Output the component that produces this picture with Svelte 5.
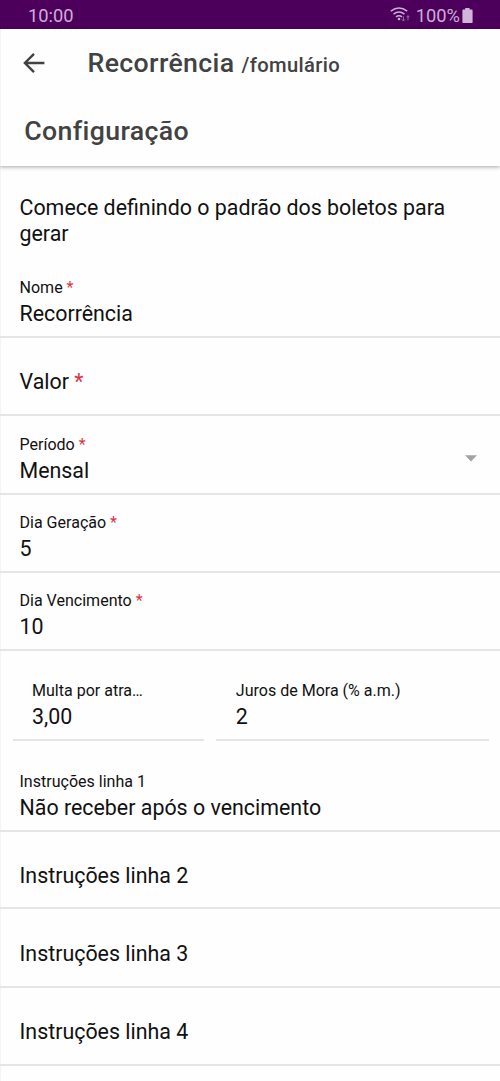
<script>
  const main = [
    { label: 'Nome', required: true, value: 'Recorrência' },
    { label: 'Valor', required: true },
    { label: 'Período', required: true, value: 'Mensal', select: true },
    { label: 'Dia Geração', required: true, value: '5' },
    { label: 'Dia Vencimento', required: true, value: '10' }
  ];
  const rates = [
    { label: 'Multa por atra…', value: '3,00' },
    { label: 'Juros de Mora (% a.m.)', value: '2' }
  ];
  const instructions = [
    { label: 'Instruções linha 1', value: 'Não receber após o vencimento' },
    { label: 'Instruções linha 2' },
    { label: 'Instruções linha 3' },
    { label: 'Instruções linha 4' }
  ];
</script>

{#snippet field(f)}
  <div class="field" class:empty={!f.value}>
    <div class="text">
      <span class="label">{f.label}{#if f.required}<span class="required">&nbsp;*</span>{/if}</span>
      {#if f.value}<span class="value">{f.value}</span>{/if}
    </div>
    {#if f.select}
      <svg class="caret" width="12" height="7" viewBox="0 0 12 7"><path d="M0 .3h12L6 6.4z" fill="#a3a3a3" /></svg>
    {/if}
  </div>
{/snippet}

<div class="screen">
  <div class="status">
    <span class="clock">10:00</span>
    <div class="indicators">
      <svg class="wifi" width="20" height="16" viewBox="0 0 20 16" fill="none" stroke="#cdaed6">
        <path d="M.8 5.2Q9 -1.1 17.2 5.2M3.500 8.200Q9 3.700 14.500 8.200M6 10.900Q9 8.500 12 10.900" stroke-width="1.5" />
        <circle cx="9" cy="13" r="1.3" fill="#cdaed6" stroke="none" />
        <path d="M13.400 10.300v4.600M11.800 13.400l1.600 1.600 1.600-1.600M18 14.300V9.700M16.600 11.300L18 9.700l1.400 1.600" stroke="#9c6aac" stroke-width="1" />
      </svg>
      <span class="percent">100%</span>
      <svg class="battery" width="11" height="15" viewBox="0 0 11 15"><path d="M3.200 0h4.400v1.600h2.200q.8 0 .8.8v11.800q0 .8-.8.8H1.200q-.8 0-.8-.8V2.400q0-.8.8-.8h2z" fill="#d2b5db" /></svg>
    </div>
  </div>
  <header>
    <div class="toolbar">
      <svg class="back" width="22" height="20" viewBox="0 0 22 20" fill="none" stroke="#424242" stroke-width="2.4">
        <path d="M21.400 10H2.200M11 .9L1.900 10l9.100 9.100" />
      </svg>
      <h1>Recorrência <small>/fomulário</small></h1>
    </div>
    <h2>Configuração</h2>
  </header>
  <main>
    <p>Comece definindo o padrão dos boletos para gerar</p>
    <div class="fields">
      {#each main as f}{@render field(f)}{/each}
    </div>
    <div class="rates">
      {#each rates as f}{@render field(f)}{/each}
    </div>
    <div class="fields lines">
      {#each instructions as f}{@render field(f)}{/each}
    </div>
  </main>
</div>

<style>
  :global(body) { background: #fefefe; }
  .screen {
    box-sizing: border-box;
    height: 1081px;
    overflow: hidden;
    background: linear-gradient(90deg, #f4f4f4 1px, #fefefe 1px);
    font-family: Roboto, sans-serif;
    color: #111;
    font-size: 21.4px;
    line-height: 26px;
  }
  .status {
    height: 29px;
    box-sizing: border-box;
    padding: 3px 27px 0 28px;
    display: flex;
    justify-content: space-between;
    align-items: center;
    background: #4c005b;
    color: #cdaed6;
    font-size: 18.3px;
  }
  .indicators { display: flex; align-items: center; }
  .wifi { margin: -4px 6px 0 0; }
  .battery { margin: -2px 0 0 2px; }
  header {
    height: 137px;
    box-sizing: border-box;
    color: #424242;
    box-shadow: 0 1px 4px rgba(0, 0, 0, .35);
  }
  .toolbar {
    height: 68px;
    padding-left: 23px;
    display: flex;
    align-items: center;
    gap: 42.5px;
  }
  h1, h2 { margin: 0; font-weight: 500; font-size: 26.7px; line-height: 32px; letter-spacing: .36px; }
  h1 { padding-top: 2px; }
  small { font-size: 20.2px; letter-spacing: .36px; }
  h2 { padding: 18px 0 0 24.3px; }
  p { margin: 0; padding: 29px 20px 14px 19.5px; height: 52px; }
  .fields {
    display: grid;
    grid-template-rows: 77px 78px 79px 78px 78px;
  }
  .lines { grid-template-rows: 91px 77px 79px 78px; }
  .field {
    box-sizing: border-box;
    min-width: 0;
    padding: 0 23px 9px 19.5px;
    display: flex;
    align-items: flex-end;
    justify-content: space-between;
    border-bottom: 2px solid #e5e5e5;
  }
  .text { display: flex; flex-direction: column; white-space: nowrap; }
  .label { font-size: 16.05px; }
  .empty .label { font-size: 21.4px; }
  .empty { padding-bottom: 19px; }
  .lines .empty:nth-child(2) { padding-bottom: 18px; }
  .required { color: #d9344a; }
  .caret { margin-bottom: 22px; }
  .rates {
    height: 90px;
    display: grid;
    grid-template-columns: 191px 273px;
    gap: 12px;
    padding: 0 12px 0 13px;
  }
  .rates .field { padding-left: 19px; }
  .rates .field:last-child { padding-left: 19.8px; }
</style>
